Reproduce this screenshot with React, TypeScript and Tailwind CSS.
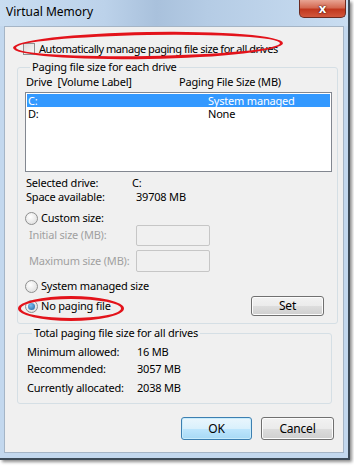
import type React from "react"

const font = "font-['Noto_Sans',sans-serif]"

function Radio({ checked = false }: { checked?: boolean }) {
  return (
    <span className="w-[13px] h-[13px] rounded-full border border-[#8e8f8f] bg-[radial-gradient(circle_at_40%_35%,#ffffff,#d8d8d8)] flex items-center justify-center shrink-0">
      {checked && (
        <span className="w-[7px] h-[7px] rounded-full bg-[radial-gradient(circle_at_40%_35%,#7ec0f0,#1c5f9e)]" />
      )}
    </span>
  )
}

function Button({ children, primary = false, className = "" }: { children: React.ReactNode; primary?: boolean; className?: string }) {
  return (
    <div
      className={`flex items-center justify-center rounded-[3px] border text-[12px] text-black ${
        primary
          ? "border-[#3c7fb1] bg-[linear-gradient(#eaf6fd_0%,#d9f0fc_50%,#bee6fd_51%,#a7d9f5_100%)] shadow-[inset_0_0_0_1px_#c8ecfc]"
          : "border-[#707070] bg-[linear-gradient(#f2f2f2_0%,#ebebeb_50%,#dddddd_51%,#cfcfcf_100%)] shadow-[inset_0_0_0_1px_#fcfcfc]"
      } ${className}`}
    >
      {children}
    </div>
  )
}

export default function App() {
  return (
    <div className={`relative w-[354px] h-[466px] bg-white overflow-hidden ${font} text-[11px] tracking-[-0.2px] text-black`}>
      {/* window frame */}
      <div className="w-[350px] h-[460px] flex flex-col bg-[#c3d8ee] border-r-[2px] border-b-[2px] border-[#3d4b58] shadow-[2px_2px_3px_rgba(0,0,0,0.45)]">
        {/* title bar */}
        <div className="h-[26px] flex justify-between bg-[linear-gradient(90deg,#c9ddf1_0%,#bcd2ea_30%,#a9c1dc_45%,#b5cce5_60%,#c9ddf1_100%)]">
          <span className="pl-[6px] pt-[5px] text-[12px] leading-[14px] tracking-normal text-black">Virtual Memory</span>
          <div className="mr-[2px] w-[47px] h-[18px] rounded-b-[5px] border border-t-0 border-[#6b2a20] bg-[linear-gradient(#e8a493_0%,#d46a52_45%,#c1381e_55%,#d2573c_100%)] flex items-center justify-center">
            <span className="text-white font-bold text-[13px] leading-none [text-shadow:0_0_2px_#40100a,0_0_1px_#40100a]">x</span>
          </div>
        </div>

        <div className="flex-1 flex">
          <div className="w-[4px]" />
          {/* client area */}
          <div className="w-[340px] h-[427px] bg-[#f0f0f0] border border-[#a5b5c6] flex flex-col">
            <div className="mt-[15px] ml-[18px] flex items-center gap-[4px] h-[13px]">
              <span className="w-[12px] h-[12px] border border-[#8f8f8f] bg-[linear-gradient(135deg,#dcdcdc,#f8f8f8)] shrink-0" />
              <span className="leading-[13px] tracking-[-0.45px]">Automatically manage paging file size for all drives</span>
            </div>

            <fieldset className="mt-[5px] ml-[12px] w-[319px] border border-[#d5dfe5] rounded-[3px] pl-[7px] pr-[5px] pb-[7px]">
              <legend className="ml-[5px] px-[2px] leading-[14px]">Paging file size for each drive</legend>
              <div className="mt-[1px] h-[14px] flex leading-[14px]">
                <span className="w-[154px] pl-[1px]">Drive&nbsp;&nbsp;[Volume Label]</span>
                <span>Paging File Size (MB)</span>
              </div>
              <div className="mt-[3px] w-[307px] h-[80px] bg-white border border-[#828790] p-[1px]">
                <div className="h-[13px] bg-[#3399ff] text-white flex leading-[13px]">
                  <span className="w-[181px] pl-[1px]">C:</span>
                  <span>System managed</span>
                </div>
                <div className="h-[14px] flex leading-[14px]">
                  <span className="w-[181px] pl-[1px]">D:</span>
                  <span>None</span>
                </div>
              </div>
              <div className="mt-[4px] flex leading-[14px]">
                <span className="w-[107px] shrink-0 pl-[1px]">Selected drive:</span>
                <span>C:</span>
              </div>
              <div className="flex leading-[14px]">
                <span className="w-[111px] shrink-0 pl-[1px]">Space available:</span>
                <span>39708 MB</span>
              </div>
              <div className="mt-[7px] flex items-center gap-[3px] h-[14px]">
                <Radio />
                <span className="leading-[14px]">Custom size:</span>
              </div>
              <div className="flex items-center h-[21px]">
                <span className="w-[111px] shrink-0 pl-[4px] text-[#a0a0a0]">Initial size (MB):</span>
                <span className="w-[74px] h-[21px] border border-[#c6c6c6] rounded-[2px]" />
              </div>
              <div className="mt-[4px] flex items-center h-[22px]">
                <span className="w-[111px] shrink-0 pl-[4px] text-[#a0a0a0]">Maximum size (MB):</span>
                <span className="w-[74px] h-[22px] border border-[#c6c6c6] rounded-[2px]" />
              </div>
              <div className="mt-[7px] flex items-center gap-[3px] h-[14px]">
                <Radio />
                <span className="leading-[14px]">System managed size</span>
              </div>
              <div className="mt-[3px] flex items-center h-[20px]">
                <Radio checked />
                <span className="ml-[3px] leading-[14px]">No paging file</span>
                <Button className="ml-auto mr-[8px] w-[73px] h-[20px]">Set</Button>
              </div>
            </fieldset>

            <fieldset className="mt-[2px] ml-[12px] w-[315px] border border-[#d5dfe5] rounded-[3px] pl-[9px] pb-[8px]">
              <legend className="ml-[5px] px-[2px] leading-[14px]">Total paging file size for all drives</legend>
              <div className="mt-[5px] flex leading-[14px]">
                <span className="w-[110px] shrink-0">Minimum allowed:</span>
                <span>16 MB</span>
              </div>
              <div className="mt-[3px] flex leading-[14px]">
                <span className="w-[110px] shrink-0">Recommended:</span>
                <span>3057 MB</span>
              </div>
              <div className="mt-[5px] flex leading-[14px]">
                <span className="w-[110px] shrink-0">Currently allocated:</span>
                <span>2038 MB</span>
              </div>
            </fieldset>

            <div className="mt-[13px] mr-[9px] flex justify-end gap-[9px]">
              <Button primary className="w-[71px] h-[23px]">OK</Button>
              <Button className="w-[73px] h-[23px]">Cancel</Button>
            </div>
          </div>
          <div className="w-[4px]" />
        </div>
      </div>

      {/* red annotation marks */}
      <div className="absolute left-[13px] top-[32px] w-[270px] h-[27px] rounded-[50%] border-[3px] border-[#e3131b] -rotate-[1deg]" />
      <div className="absolute left-[18px] top-[296px] w-[106px] h-[25px] rounded-[50%] border-[3px] border-[#e3131b]" />
    </div>
  )
}
